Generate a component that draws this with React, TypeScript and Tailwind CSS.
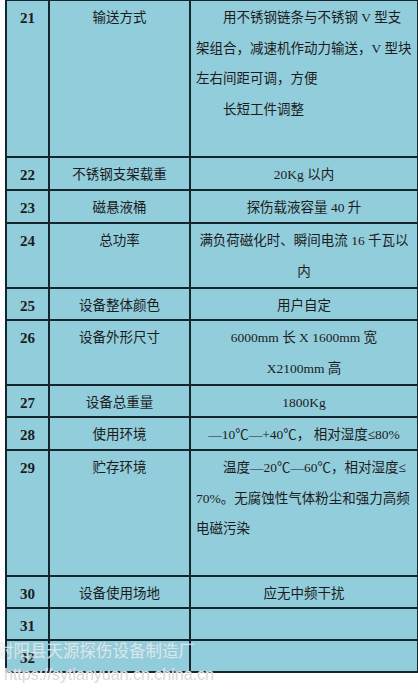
import React from 'react';

type Line = { text: string; indent?: boolean; align?: 'left' | 'center' };
type Row = { no: string; name: string; value: Line[]; h: number };

const rows: Row[] = [
  {
    no: '21',
    name: '输送方式',
    h: 157,
    value: [
      { text: '用不锈钢链条与不锈钢 V 型支', indent: true, align: 'left' },
      { text: '架组合，减速机作动力输送，V 型块', align: 'left' },
      { text: '左右间距可调，方便', align: 'left' },
      { text: '长短工件调整', indent: true, align: 'left' },
    ],
  },
  { no: '22', name: '不锈钢支架载重', h: 33, value: [{ text: '20Kg 以内' }] },
  { no: '23', name: '磁悬液桶', h: 33, value: [{ text: '探伤载液容量 40 升' }] },
  {
    no: '24',
    name: '总功率',
    h: 64,
    value: [{ text: '满负荷磁化时、瞬间电流 16 千瓦以' }, { text: '内' }],
  },
  { no: '25', name: '设备整体颜色', h: 32, value: [{ text: '用户自定' }] },
  {
    no: '26',
    name: '设备外形尺寸',
    h: 65,
    value: [{ text: '6000mm 长 X 1600mm 宽' }, { text: 'X2100mm 高' }],
  },
  { no: '27', name: '设备总重量', h: 32, value: [{ text: '1800Kg' }] },
  { no: '28', name: '使用环境', h: 33, value: [{ text: '—10℃—+40℃， 相对湿度≤80%' }] },
  {
    no: '29',
    name: '贮存环境',
    h: 126,
    value: [
      { text: '温度—20℃—60℃，相对湿度≤', indent: true, align: 'left' },
      { text: '70%。无腐蚀性气体粉尘和强力高频', align: 'left' },
      { text: '电磁污染', align: 'left' },
    ],
  },
  { no: '30', name: '设备使用场地', h: 32, value: [{ text: '应无中频干扰' }] },
  { no: '31', name: '', h: 31, value: [] },
  { no: '32', name: '', h: 31, value: [] },
];

const serif = { fontFamily: '"Liberation Serif", "Noto Sans CJK SC", serif' };

export default function App() {
  return (
    <div className="relative w-[418px] h-[692px] overflow-hidden bg-white text-[#1c1c1c]" style={serif}>
      <table className="table-fixed border-collapse ml-[5px] mt-[-1px] w-[412px] bg-[#92cddc]">
        <colgroup>
          <col className="w-[43px]" />
          <col className="w-[141px]" />
          <col className="w-[228px]" />
        </colgroup>
        <tbody>
          {rows.map((r) => {
            const multi = r.value.length > 1;
            return (
              <tr key={r.no} style={{ height: r.h }}>
                <td className="border-2 border-[#15262c] align-top p-0 pt-[4px] text-center font-bold text-[15px] leading-[26px]">
                  {r.no}
                </td>
                <td className="border-2 border-[#15262c] align-top p-0 pt-[4px] text-center text-[13.5px] leading-[26px]">
                  {r.name}
                </td>
                <td
                  className={
                    'border-2 border-[#15262c] align-top px-[5px] text-[13.5px] ' +
                    (multi ? 'pt-[2px] leading-[30.5px]' : 'pt-[4px] leading-[26px]')
                  }
                >
                  {r.value.map((l, i) => (
                    <div
                      key={i}
                      className={
                        'whitespace-nowrap ' +
                        (l.align === 'left' ? 'text-left' : 'text-center') +
                        (l.indent ? ' pl-[27px]' : '')
                      }
                    >
                      {l.text}
                    </div>
                  ))}
                </td>
              </tr>
            );
          })}
        </tbody>
      </table>

      {/* watermark */}
      <div
        className="absolute left-[-3px] top-[640px] text-[16.5px] leading-[20px] text-[#eef2f3] opacity-75 whitespace-nowrap"
        style={{ fontFamily: '"Noto Sans CJK SC", sans-serif', textShadow: '0 0 1px #b8c4c8' }}
      >
        射阳县天源探伤设备制造厂
      </div>
      <div
        className="absolute left-[4px] top-[665px] text-[16px] leading-[20px] text-[#d9d9d9] whitespace-nowrap"
        style={{ fontFamily: '"Liberation Sans", sans-serif', textShadow: '0 0 1px #fff' }}
      >
        https://sytianyuan.cn.china.cn
      </div>
    </div>
  );
}
